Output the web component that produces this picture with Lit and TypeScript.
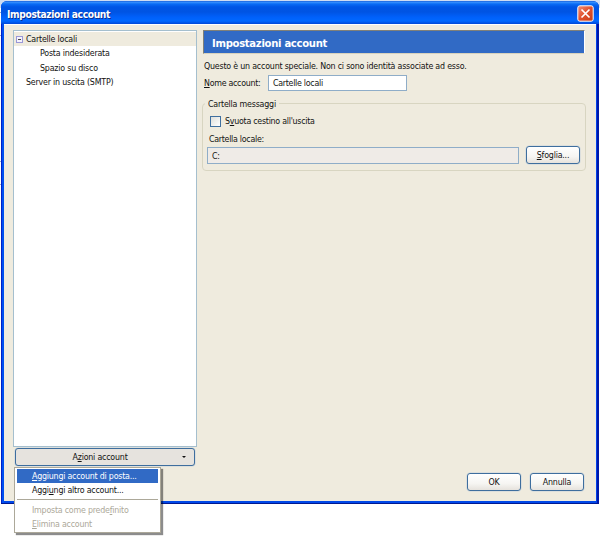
import { LitElement, html, css } from "lit";
import { customElement } from "lit/decorators.js";

@customElement("app-root")
export class AppRoot extends LitElement {
  static styles = css`
    :host { display: block; position: relative; width: 600px; height: 544px; overflow: hidden; background: #fff; color: #111;
      font: 8.8px/14px "DejaVu Sans Condensed", "DejaVu Sans", sans-serif; font-stretch: condensed; letter-spacing: -0.2px; white-space: nowrap; }
    * { box-sizing: border-box; }
    u { text-decoration: underline; text-decoration-thickness: 1px; text-underline-offset: 1px; }
    .desk { background: linear-gradient(#cfdcf2, #cfdcf2) 0 0 / 600px 8px no-repeat, linear-gradient(#9aa6cc, #9aa6cc) 0 12px / 1px 1px no-repeat, linear-gradient(#9aa6cc, #9aa6cc) 0 35px / 1px 1px no-repeat, linear-gradient(#9aa6cc, #9aa6cc) 0 161px / 1px 1px no-repeat, linear-gradient(#9aa6cc, #9aa6cc) 0 184px / 1px 1px no-repeat; padding: 1px; height: 505px; }
    .window { width: 598px; height: 503px; display: flex; flex-direction: column; border-radius: 6px 6px 0 0; background: linear-gradient(90deg, #0020c8 0 1px, #0050f0 1px 3px, #0048e8 3px 595px, #0040ea 595px 596px, #0018a8 596px); border-bottom: 1px solid #001890; overflow: hidden; }
    .title { height: 23px; flex: none; display: flex; align-items: center; justify-content: space-between; padding: 2px 5px 0 6px; color: #fff;
      background: linear-gradient(#0a4ed0 0, #3c94ff 1px, #0a6cf5 3px, #0055e5 6px, #0054e3 11px, #0060fa 16px, #0068ff 20px, #0048d8 23px);
      font-size: 10.2px; font-weight: bold; letter-spacing: -0.36px; text-shadow: 1px 1px #0a2f90; }
    .title span { padding-top: 2px; }
    .close { width: 17px; height: 17px; display: block; }
    .body { margin: 0 3px 2px; flex: 1; background: #efebde; border-top: 1px solid #fff; display: grid; grid-template-columns: 184px 1fr; column-gap: 5px; padding: 5px 9px 0; }
    .left { display: flex; flex-direction: column; }
    .tree { height: 417px; background: #fff; border: 1px solid #a5bfce; padding-top: 1px; }
    .row { height: 14.3px; line-height: 15px; padding-left: 12px; display: flex; align-items: center; padding-top: 1px; }
    .row.on { background: #efebde; padding-left: 2px; }
    .row.child { padding-left: 26px; }
    .box { width: 7px; height: 7px; border: 1px solid #9a98d8; background: #f5f3fc; margin-right: 3px; display: flex; align-items: center; justify-content: center; }
    .box::before { content: ""; width: 3px; height: 1px; background: #444; }
    .btn { height: 18px; border: 1px solid #3e6e9e; border-radius: 3px; background: linear-gradient(#fff, #f6f5f2 60%, #e6e2dc); display: flex; align-items: center; justify-content: center; box-shadow: 0 0 0 .5px #c9d4dc; }
    .btn.wide { width: 180px; margin: 1px 0 0 2px; background: #e6e3de; padding: 0 8px 0 0; }
    .wide span { flex: 1; text-align: center; padding-left: 2px; }
    .arrow { border: 2px solid transparent; border-top-color: #111; border-bottom: 0; width: 4px; }
    .right { display: flex; flex-direction: column; }
    .banner { width: 382px; height: 24px; margin-left: 1px; border: 1px solid; border-color: #808078 #fff #d8d2bd #808078; background: #316ac5; color: #fff; font-size: 11.2px; font-weight: bold; line-height: 25px; padding-left: 8px; letter-spacing: -0.3px; }
    .info { margin: 5px 0 0 2px; height: 14px; }
    .name { display: flex; align-items: center; margin: 1px 0 0 2px; height: 18px; }
    .name label { width: 64px; letter-spacing: -.28px; }
    .field { border: 1px solid #8fadc8; background: #fff; height: 16px; line-height: 15px; padding-left: 4px; letter-spacing: -.28px; }
    .name .field { width: 139px; }
    .group { position: relative; height: 68px; margin-top: 11px; border: 1px solid #d8d5c1; border-radius: 4px; padding: 11px 6px 0 5px; width: 384px; }
    .legend { position: absolute; left: 2px; top: -7px; padding: 0 3px; background: #efebde; }
    .check { display: flex; align-items: center; gap: 4px; height: 12px; padding-left: 2px; letter-spacing: -.26px; }
    .check i { width: 11px; height: 11px; border: 1px solid #3f6f9f; background: linear-gradient(135deg, #dedfda, #fff); }
    .path-label { height: 14px; margin: 5px 0 0 1px; letter-spacing: -.28px; }
    .path { display: flex; gap: 7px; align-items: center; margin-left: -1px; }
    .path .field { flex: none; width: 312px; height: 17px; line-height: 16px; background: #efebe7; }
    .path .btn { flex: none; width: 54px; }
    .actions { margin-top: auto; margin-bottom: 10px; display: flex; gap: 9px; padding-left: 265px; }
    .actions .btn { width: 54px; }
    .menu { position: absolute; left: 14px; top: 467px; width: 147px; height: 66px; background: #fff; border: 1px solid #aca899; box-shadow: 2px 2px 1px rgba(0,0,0,.45); padding: 1px 2px; color: #111; }
    .item { height: 13.5px; line-height: 14px; padding-left: 15px; letter-spacing: -.22px; }
    .item.sel { background: #316ac5; color: #fff; }
    .item.off { color: #aca899; line-height: 13px; }
    .sep { height: 1px; background: #aca899; margin: 3px 0 4px; }
  `;

  render() {
    return html`
      <div class="desk"><div class="window">
        <div class="title"><span>Impostazioni account</span>
          <svg class="close" viewBox="0 0 17 17"><defs><linearGradient id="r" x2="1" y2="1"><stop stop-color="#f09078"/><stop offset=".5" stop-color="#e0502c"/><stop offset="1" stop-color="#c63c14"/></linearGradient></defs>
            <rect x=".8" y=".8" width="15.4" height="15.4" rx="2" fill="url(#r)" stroke="#fff" stroke-width="1"/><path d="M4.5 4.5l8 8M12.5 4.5l-8 8" stroke="#fff" stroke-width="1.7"/></svg>
        </div>
        <div class="body">
          <div class="left">
            <div class="tree">
              <div class="row on"><i class="box"></i><span>Cartelle locali</span></div>
              <div class="row child">Posta indesiderata</div>
              <div class="row child">Spazio su disco</div>
              <div class="row">Server in uscita (SMTP)</div>
            </div>
            <div class="btn wide"><span>A<u>z</u>ioni account</span><i class="arrow"></i></div>
          </div>
          <div class="right">
            <div class="banner">Impostazioni account</div>
            <div class="info">Questo è un account speciale. Non ci sono identità associate ad esso.</div>
            <div class="name"><label><u>N</u>ome account:</label><div class="field">Cartelle locali</div></div>
            <div class="group">
              <div class="legend">Cartella messaggi</div>
              <div class="check"><i></i><span>S<u>v</u>uota cestino all'uscita</span></div>
              <div class="path-label">Cartella locale:</div>
              <div class="path"><div class="field">C:</div><div class="btn"><span><u>S</u>foglia...</span></div></div>
            </div>
            <div class="actions"><div class="btn">OK</div><div class="btn">Annulla</div></div>
          </div>
        </div>
      </div></div>
      <div class="menu">
        <div class="item sel"><u>A</u>ggiungi account di posta...</div>
        <div class="item">Aggi<u>u</u>ngi altro account...</div>
        <div class="sep"></div>
        <div class="item off">Imposta come prede<u>f</u>inito</div>
        <div class="item off"><u>E</u>limina account</div>
      </div>`;
  }
}
